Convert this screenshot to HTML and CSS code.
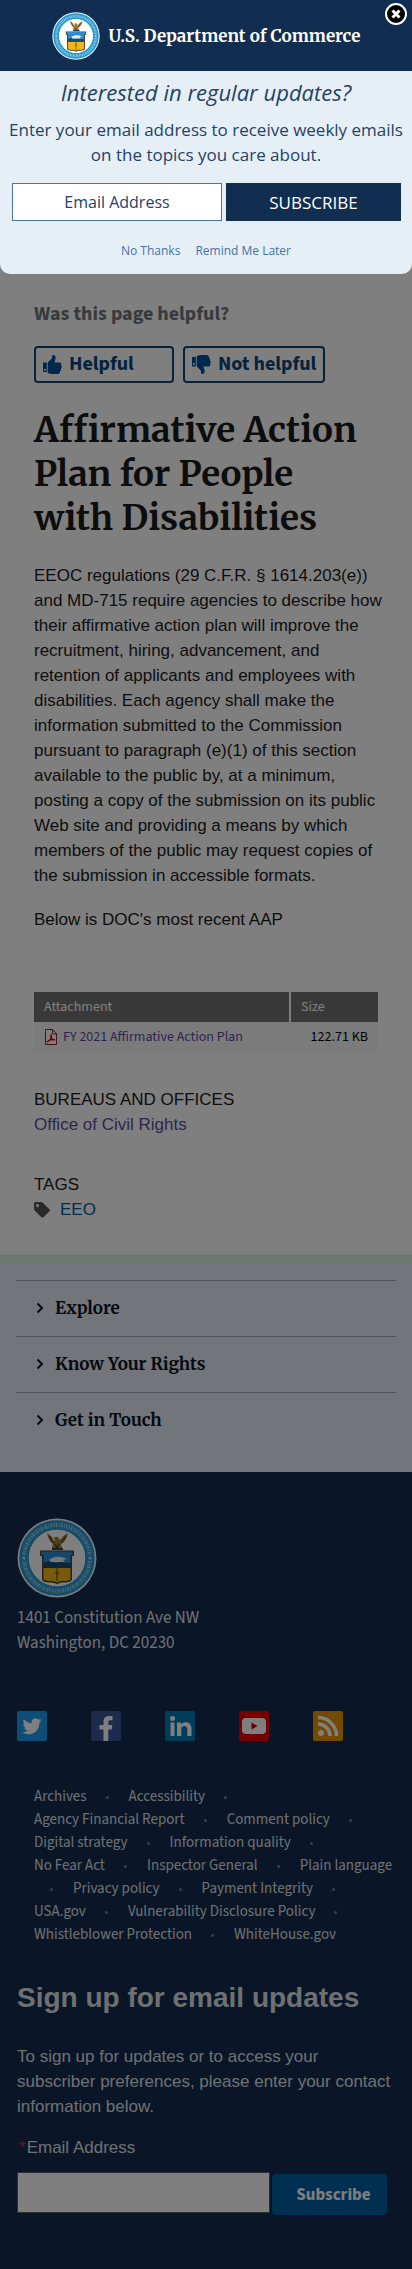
FILE: index.html
```html
<!DOCTYPE html>
<html lang="en">
<head>
<meta charset="utf-8">
<meta name="viewport" content="width=device-width, initial-scale=1">
<title>Affirmative Action Plan for People with Disabilities</title>
<link rel="stylesheet" href="styles.css">
</head>
<body>
<svg class="defs" aria-hidden="true">
  <symbol id="seal" viewBox="0 0 80 80">
    <circle cx="40" cy="40" r="39.5" fill="#f4f8fb"/>
    <circle cx="40" cy="40" r="33" fill="none" stroke="#2a9bd0" stroke-width="9.6"/>
    <circle cx="40" cy="40" r="28" fill="#fff"/>
    <circle cx="40" cy="40" r="33" fill="none" stroke="#d9f0f8" stroke-width="4" stroke-dasharray="1.6 1.4 1 1.2" stroke-dashoffset="2" opacity=".6"/>
    <path d="M3.500 37h7v6h-7zM69.500 37h7v6h-7z" fill="#2a9bd0"/>
    <path d="M7 38l.7 1.500 1.500.5-1.500.7-.7 1.500-.7-1.500-1.500-.7 1.500-.5zM73 38l.7 1.500 1.500.5-1.500.7-.7 1.500-.7-1.500-1.500-.7 1.500-.5z" fill="#d9f0f8"/>
    <path d="M30 15c1 5 3 9 6 11l-1 4h10l-1-4c4-2 6-6 7-11-4 2-6 4-8 7-1-3-3-4-5-3l-2 1 2 1-1 3c-1-4-3-7-7-9z" fill="#a87a36"/>
    <path d="M32 18l5 7M49 18l-5 7M38 26l2 4 2-4" fill="none" stroke="#513817" stroke-width="1.200"/>
    <path d="M35 30h11v2H35z" fill="#33424d"/>
    <path d="M23 32.500h34v5l-2 1v22c0 3-3 4-8 4-4 0-6 1-7 2-1-1-3-2-7-2-5 0-8-1-8-4v-22l-2-1z" fill="#4d4320"/>
    <path d="M24.500 33.500h31v3l-2 1V49H26.500V37.500l-2-1z" fill="#2d8cd0"/>
    <path d="M26.500 45l6-2 5 2 6-1 10 1v4.500h-27z" fill="#174a72"/>
    <path d="M32 42c5-4 12-4 18-1l-4 1 2 2H34z" fill="#e4eef0"/>
    <path d="M26.500 50h27v10c0 3-4 3-7 3s-5 .5-6.500 1.500C38.500 63.500 36 63 33 63s-6.500 0-6.500-3z" fill="#f0b51c"/>
    <path d="M40 49v14M38 55h4" stroke="#69501a" stroke-width="1.200"/>
  </symbol>
</svg>

<main class="page">
  <section class="feedback" aria-labelledby="feedback-title">
    <p class="feedback-title" id="feedback-title">Was this page helpful?</p>
    <div class="feedback-actions">
      <button class="vote" type="button">
        <svg viewBox="0 0 20 20" aria-hidden="true"><path d="M0 8h4v10H0zM5 8l4-4 1-4c3 0 4 2 3 5l-1 3h5c2 0 3 1 2 3 1 1 1 2 0 3 0 1 0 2-1 3 0 2-1 3-3 3H9c-2 0-3-1-4-1z"/><circle cx="2" cy="15.500" r="1" fill="#fff"/></svg>
        Helpful
      </button>
      <button class="vote" type="button">
        <svg viewBox="0 0 20 20" aria-hidden="true"><path d="M0 2h4v10H0zM5 12l4 4 1 4c3 0 4-2 3-5l-1-3h5c2 0 3-1 2-3 1-1 1-2 0-3 0-1 0-2-1-3 0-2-1-3-3-3H9C7 0 6 1 5 1z"/><circle cx="2" cy="9.500" r="1" fill="#fff"/></svg>
        Not helpful
      </button>
    </div>
  </section>

  <h1>Affirmative Action Plan for People with Disabilities</h1>
  <p class="copy">EEOC regulations (29 C.F.R. § 1614.203(e)) and MD-715 require agencies to describe how their affirmative action plan will improve the recruitment, hiring, advancement, and retention of applicants and employees with disabilities. Each agency shall make the information submitted to the Commission pursuant to paragraph (e)(1) of this section available to the public by, at a minimum, posting a copy of the submission on its public Web site and providing a means by which members of the public may request copies of the submission in accessible formats.</p>
  <p class="copy">Below is DOC's most recent AAP</p>

  <table class="files">
    <thead><tr><th scope="col">Attachment</th><th scope="col" class="size-col">Size</th></tr></thead>
    <tbody><tr>
      <td><a class="file" href="#"><svg viewBox="0 0 14 18" aria-hidden="true"><path d="M1.500 1.500h7l4 4v11h-11z" fill="#fff" stroke="#8d2636"/><path d="M8.500 1v5H13" fill="none" stroke="#8d2636"/><path d="M3 14c4-2 5-5 4-7-1 2 1 5 4 5-3-1-6 0-8 2z" fill="none" stroke="#d3102e" stroke-width="1.500"/></svg>FY 2021 Affirmative Action Plan</a></td>
      <td class="size">122.71 KB</td>
    </tr></tbody>
  </table>

  <section class="meta">
    <h2>Bureaus and Offices</h2>
    <a class="visited" href="#">Office of Civil Rights</a>
  </section>
  <section class="meta">
    <h2>Tags</h2>
    <a class="tag" href="#"><svg viewBox="0 0 16 16" aria-hidden="true"><path fill-rule="evenodd" d="M0 1.500C0 .7.700 0 1.500 0H7c.6 0 1 .2 1.500.6l7 6.600c.6.6.6 1.500 0 2.100l-6 6c-.6.6-1.500.6-2.100 0L.6 8.500C.2 8 0 7.600 0 7zM3.500 2a1.500 1.500 0 1 0 0 3 1.500 1.500 0 0 0 0-3z"/></svg>EEO</a>
  </section>
</main>

<nav class="drawer" aria-label="More">
  <ul>
    <li><button type="button"><svg viewBox="0 0 8 12" aria-hidden="true"><path d="M1.500 1.500L6 6l-4.500 4.500"/></svg>Explore</button></li>
    <li><button type="button"><svg viewBox="0 0 8 12" aria-hidden="true"><path d="M1.500 1.500L6 6l-4.500 4.500"/></svg>Know Your Rights</button></li>
    <li><button type="button"><svg viewBox="0 0 8 12" aria-hidden="true"><path d="M1.500 1.500L6 6l-4.500 4.500"/></svg>Get in Touch</button></li>
  </ul>
</nav>

<footer class="footer">
  <svg class="footer-seal" role="img" aria-label="Department of Commerce seal"><use href="#seal"/></svg>
  <address>1401 Constitution Ave NW<br>Washington, DC 20230</address>
  <div class="social">
    <a href="#" aria-label="Twitter"><svg viewBox="0 0 30 30"><rect width="30" height="30" rx="2" fill="#1d9bf0"/><path d="M24.500 9.300c-.7.300-1.400.5-2.200.6.8-.5 1.400-1.200 1.700-2.100-.8.4-1.600.8-2.500.9a3.900 3.900 0 0 0-6.700 3.600c-3.200-.2-6.100-1.700-8-4.100-1.100 1.900-.5 4.100 1.200 5.200-.6 0-1.200-.2-1.800-.5 0 1.900 1.300 3.500 3.100 3.900-.6.1-1.200.2-1.800.1.500 1.500 2 2.700 3.700 2.700A8 8 0 0 1 5 21.200c8 5 17.800-.2 17.500-9.800.8-.6 1.500-1.300 2-2.100z" fill="#fff"/></svg></a>
    <a href="#" aria-label="Facebook"><svg viewBox="0 0 30 30"><rect width="30" height="30" rx="2" fill="#3b5998"/><path d="M12.500 30V18.500h-4v-4.500h4v-3.500C12.500 6.700 15 5 18.500 5c1.300 0 2.500.1 3 .2v4h-2.200c-1.700 0-2 .8-2 2V14h4l-.6 4.500h-3.400V30z" fill="#fff"/></svg></a>
    <a href="#" aria-label="LinkedIn"><svg viewBox="0 0 30 30"><rect width="30" height="30" rx="2" fill="#007bb6"/><circle cx="7.500" cy="7.500" r="2.500" fill="#fff"/><path d="M5.500 11.500h4V25h-4zM12 11.500h4v2c2-3.500 10.500-3.800 10.500 4V25h-4.200v-6.800c0-4.500-6-4.200-6 0V25H12z" fill="#fff"/></svg></a>
    <a href="#" aria-label="YouTube"><svg viewBox="0 0 30 30"><rect width="30" height="30" rx="2" fill="#ed0000"/><rect x="3" y="7" width="24" height="16" rx="4" fill="#fff"/><path d="M12.500 11.500v7l6-3.500z" fill="#d00000"/></svg></a>
    <a href="#" aria-label="RSS"><svg viewBox="0 0 30 30"><rect width="30" height="30" rx="2" fill="#e89500"/><circle cx="8" cy="22" r="3" fill="#fff"/><path d="M5 13a12 12 0 0 1 12 12M5 6.500A18.500 18.500 0 0 1 23.500 25" fill="none" stroke="#fff" stroke-width="3.500"/></svg></a>
  </div>
  <nav class="links" aria-label="Footer">
    <a href="#">Archives</a> <i></i> <a href="#">Accessibility</a> <i></i>
    <a href="#">Agency Financial Report</a> <i></i> <a href="#">Comment policy</a> <i></i>
    <a href="#">Digital strategy</a> <i></i> <a href="#">Information quality</a> <i></i>
    <a href="#">No Fear Act</a> <i></i> <a href="#">Inspector General</a> <i></i>
    <a href="#">Plain language</a> <i></i> <a href="#">Privacy policy</a> <i></i>
    <a href="#">Payment Integrity</a> <i></i> <a href="#">USA.gov</a> <i></i>
    <a href="#">Vulnerability Disclosure Policy</a> <i></i>
    <a href="#">Whistleblower Protection</a> <i></i> <a href="#">WhiteHouse.gov</a>
  </nav>
  <h2>Sign up for email updates</h2>
  <p>To sign up for updates or to access your subscriber preferences, please enter your contact information below.</p>
  <form class="signup">
    <label for="footer-email"><span class="required">*</span>Email Address</label>
    <div class="signup-row">
      <input id="footer-email" type="email">
      <button type="button">Subscribe</button>
    </div>
  </form>
</footer>

<div class="backdrop"></div>
<div class="dialog" role="dialog" aria-modal="true" aria-labelledby="dialog-title">
  <div class="brand">
    <svg class="brand-seal" aria-hidden="true"><use href="#seal"/></svg>
    <span>U.S. Department of Commerce</span>
  </div>
  <button class="close" type="button" aria-label="Close"><svg viewBox="0 0 24 24" aria-hidden="true"><circle cx="12" cy="12" r="10" fill="#000" stroke="#fff" stroke-width="2"/><path d="M8.500 8.500l7 7M15.500 8.500l-7 7" stroke="#fff" stroke-width="3"/></svg></button>
  <div class="dialog-body">
    <h2 id="dialog-title">Interested in regular updates?</h2>
    <p>Enter your email address to receive weekly emails on the topics you care about.</p>
    <form class="dialog-form">
      <input type="email" placeholder="Email Address" aria-label="Email Address">
      <button type="button">SUBSCRIBE</button>
    </form>
    <div class="dismiss"><a href="#">No Thanks</a><a href="#">Remind Me Later</a></div>
  </div>
</div>
</body>
</html>
```
FILE: styles.css
```css
:root {
  --sans: "Liberation Sans", Arial, sans-serif;
  --source: "Source Sans Pro", "Source Sans 3", "Noto Sans CJK SC", "Noto Sans", sans-serif;
  --serif: "Merriweather", "Noto Serif", "DejaVu Serif Condensed", "DejaVu Serif", serif;
  --open: "Open Sans", "Noto Sans", sans-serif;
  --navy: #112e51;
}

* { box-sizing: border-box; }

body {
  position: relative;
  margin: 0;
  background: #fff;
  color: #1b1b1b;
  font: 17px/25px var(--sans);
}

h1, h2, p, ul { margin: 0; padding: 0; }
a { color: inherit; text-decoration: none; }
button, input { font: inherit; margin: 0; }
.defs { position: absolute; width: 0; height: 0; }

.page { padding: 301px 34px 33px; }

.feedback-title {
  color: #71767a;
  font: 700 20px/26px var(--source);
}
.feedback-actions {
  display: flex;
  gap: 9px;
  margin-top: 19px;
}
.vote {
  display: flex;
  align-items: center;
  gap: 7px;
  min-width: 140px;
  height: 37px;
  padding: 0 7px;
  border: 2px solid #0b4778;
  border-radius: 4px;
  background: none;
  color: #0b4778;
  font: 700 20px/25px var(--source);
}
.vote svg { width: 19px; height: 19px; fill: #00509a; }

h1 {
  margin: 25px 0 23px;
  font: 700 35px/44px var(--serif);
}
.copy { margin-right: -6px; }
.copy + .copy { margin-top: 19px; }

.files {
  width: 100%;
  margin-top: 60px;
  border-collapse: collapse;
  font: 14px/20px var(--source);
}
.files th {
  height: 30px;
  padding: 0 10px;
  background: #727272;
  color: #fff;
  font-weight: 400;
  text-align: left;
}
.files td { height: 30px; padding: 0 10px; background: #f6f6f6; }
.files th + th { border-left: 2px solid #fff; }
.size-col { width: 88px; }
.files .size { color: #000; text-align: right; }
.file { display: flex; align-items: center; gap: 5px; color: #5f4aa5; }
.file svg { width: 14px; height: 18px; }

.meta { margin-top: 35px; }
.meta h2 { font: inherit; text-transform: uppercase; }
.visited { color: #5f4aa5; }
.tag { display: flex; align-items: center; gap: 10px; color: #005ea2; }
.tag svg { width: 16px; height: 16px; fill: #555; }

.drawer {
  padding: 17px 16px 24px;
  border-top: 8px solid #d8f0e4;
  background: #e4ebf4;
}
.drawer ul { list-style: none; }
.drawer li { border-top: 1px solid #a3aab6; }
.drawer button {
  display: flex;
  align-items: center;
  gap: 11px;
  width: 100%;
  height: 55px;
  padding: 0 20px 2px;
  border: 0;
  background: none;
  color: #0c121c;
  font: 700 17px/24px var(--serif);
}
.drawer svg { width: 8px; height: 12px; fill: none; stroke: #0c121c; stroke-width: 2; }

.footer {
  padding: 46px 17px 56px;
  background: #142a50;
  color: #dfe1e2;
}
.footer-seal { display: block; width: 80px; height: 80px; }
address { margin-top: 8px; font: 17px/25px var(--source); }
.social { display: flex; gap: 44px; margin-top: 55px; }
.social a, .social svg { display: block; width: 30px; height: 30px; }
.links {
  margin-top: 44px;
  padding-left: 17px;
  font: 15px/23px var(--source);
}
.links a { white-space: nowrap; }
.links i {
  display: inline-block;
  width: 3px;
  height: 3px;
  margin: 0 17px 0 16px;
  border-radius: 2px;
  background: #5b83ac;
  vertical-align: middle;
}
.footer h2 { margin: 35px 0 29px; font: 700 28px/34px var(--sans); }
.signup { margin-top: 16px; }
.signup label { display: block; }
.required { padding: 0 1px 0 2px; color: #e31c3d; }
.signup-row { display: flex; gap: 2px; margin-top: 12px; padding-right: 8px; }
.signup input {
  flex: 1;
  min-width: 0;
  height: 41px;
  padding: 0 8px;
  border: 1px solid #565c65;
  background: #fff;
}
.signup button {
  width: 115px;
  height: 41px;
  margin-top: 2px;
  padding: 0 0 0 8px;
  border: 0;
  border-radius: 4px;
  background: #005ea2;
  color: #fff;
  font: 700 17px/24px var(--source);
}

.backdrop { position: absolute; inset: 0; background: rgba(0, 0, 0, .5); }

.dialog {
  position: absolute;
  top: 0;
  left: 0;
  right: 0;
  overflow: hidden;
  border-radius: 0 0 10px 10px;
  background: #e7eff6;
  color: #244265;
  font: 17px/25px var(--open);
  text-align: center;
}
.brand {
  display: flex;
  align-items: center;
  justify-content: center;
  gap: 9px;
  height: 71px;
  background: var(--navy);
  color: #fff;
  font: 700 17px/26px var(--serif);
}
.brand-seal { width: 48px; height: 48px; }
.close {
  position: absolute;
  top: 2px;
  right: 4px;
  width: 24px;
  height: 24px;
  padding: 0;
  border: 0;
  background: none;
}
.close svg { display: block; }
.dialog-body { padding: 6px 0 12px; }
.dialog h2 { font: italic 400 22px/30px var(--open); }
.dialog p { margin-top: 10px; padding: 0 6px; }
.dialog-form {
  display: grid;
  grid-template-columns: minmax(0, 6fr) minmax(0, 5fr);
  gap: 4px;
  margin-top: 16px;
  padding: 0 11px 0 12px;
}
.dialog-form input {
  width: 100%;
  height: 38px;
  padding: 0 8px;
  border: 1px solid #4a74a8;
  background: #fff;
  color: #244265;
  font-size: 16px;
  text-align: center;
}
.dialog-form input::placeholder { color: #244265; opacity: 1; }
.dialog-form button {
  height: 38px;
  padding: 0;
  border: 0;
  background: var(--navy);
  color: #fff;
}
.dismiss {
  display: flex;
  justify-content: center;
  gap: 15px;
  margin-top: 18px;
  color: #3f72ab;
  font: 12px/23px var(--open);
}
```
